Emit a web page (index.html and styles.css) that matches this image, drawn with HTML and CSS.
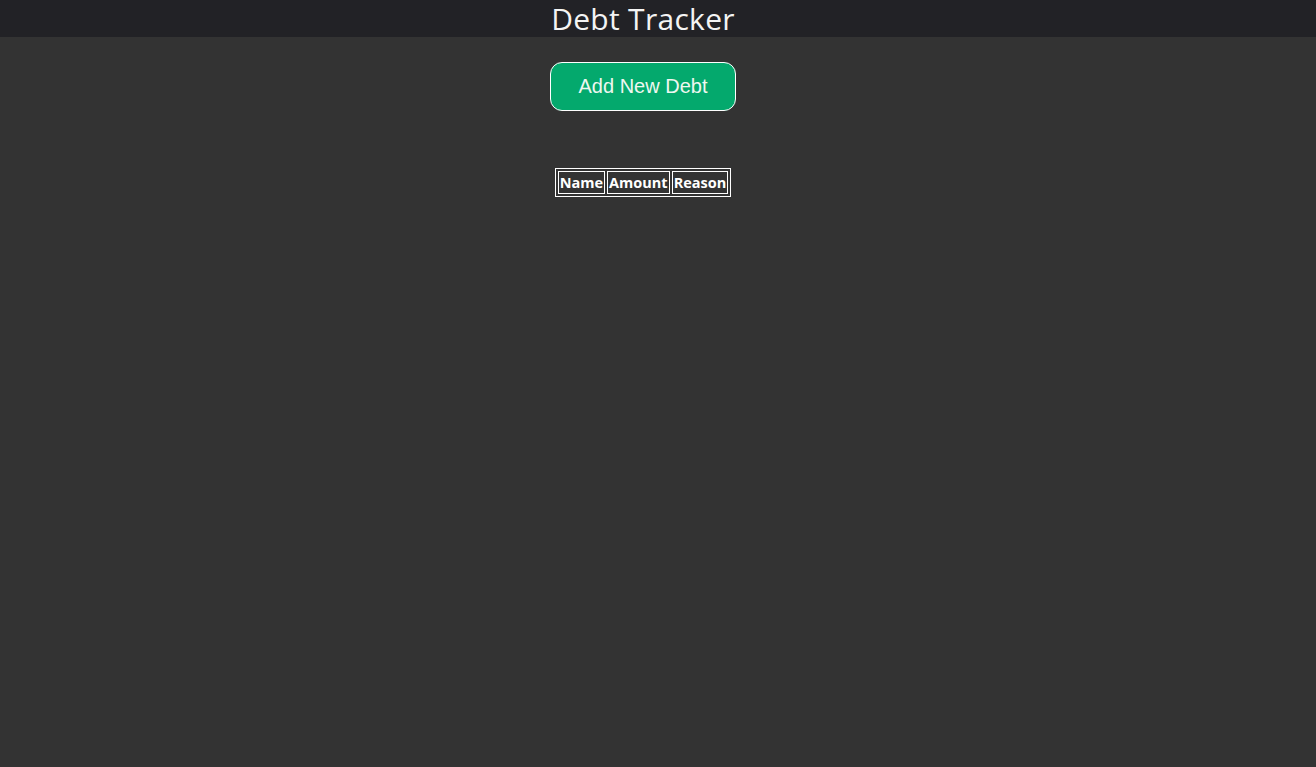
FILE: index.html
```html
<!DOCTYPE html>
<html>
<head>
<meta charset="utf-8">
<link rel="stylesheet" href="styles.css">
</head>
<body>
<header class="top">
  <h1 class="title">Debt Tracker</h1>
</header>
<main class="main">
  <button class="add-btn">Add New Debt</button>
  <table class="debts">
    <thead>
      <tr><th>Name</th><th>Amount</th><th>Reason</th></tr>
    </thead>
  </table>
</main>
</body>
</html>
```
FILE: styles.css
```css
html, body {
  margin: 0;
  padding: 0;
  background: #333333;
  height: 100%;
}
body {
  font-family: "Open Sans", "Noto Sans", sans-serif;
  color: #ffffff;
}
.top {
  background: #222226;
  height: 37px;
  display: flex;
  justify-content: center;
  align-items: center;
  padding-right: 30px;
}
.title {
  margin: 0;
  font-size: 30px;
  font-weight: 400;
  color: #f4f4f4;
  line-height: 37px;
  letter-spacing: 0.3px;
}
.main {
  display: flex;
  flex-direction: column;
  align-items: center;
  padding-top: 25px;
  padding-right: 30px;
}
.add-btn {
  width: 186px;
  height: 49px;
  background: #04a96d;
  border: 1px solid #ffffff;
  border-radius: 12px;
  color: #eef7f0;
  font-family: "Liberation Sans", Arial, sans-serif;
  font-size: 20px;
  cursor: pointer;
}
.debts {
  margin-top: 57px;
  border: 1px solid #ffffff;
  border-spacing: 2px;
}
.debts th {
  border: 1px solid #ffffff;
  padding: 1px;
  font-size: 14.5px;
  font-weight: 700;
  color: #ffffff;
  line-height: 19px;
}
```
